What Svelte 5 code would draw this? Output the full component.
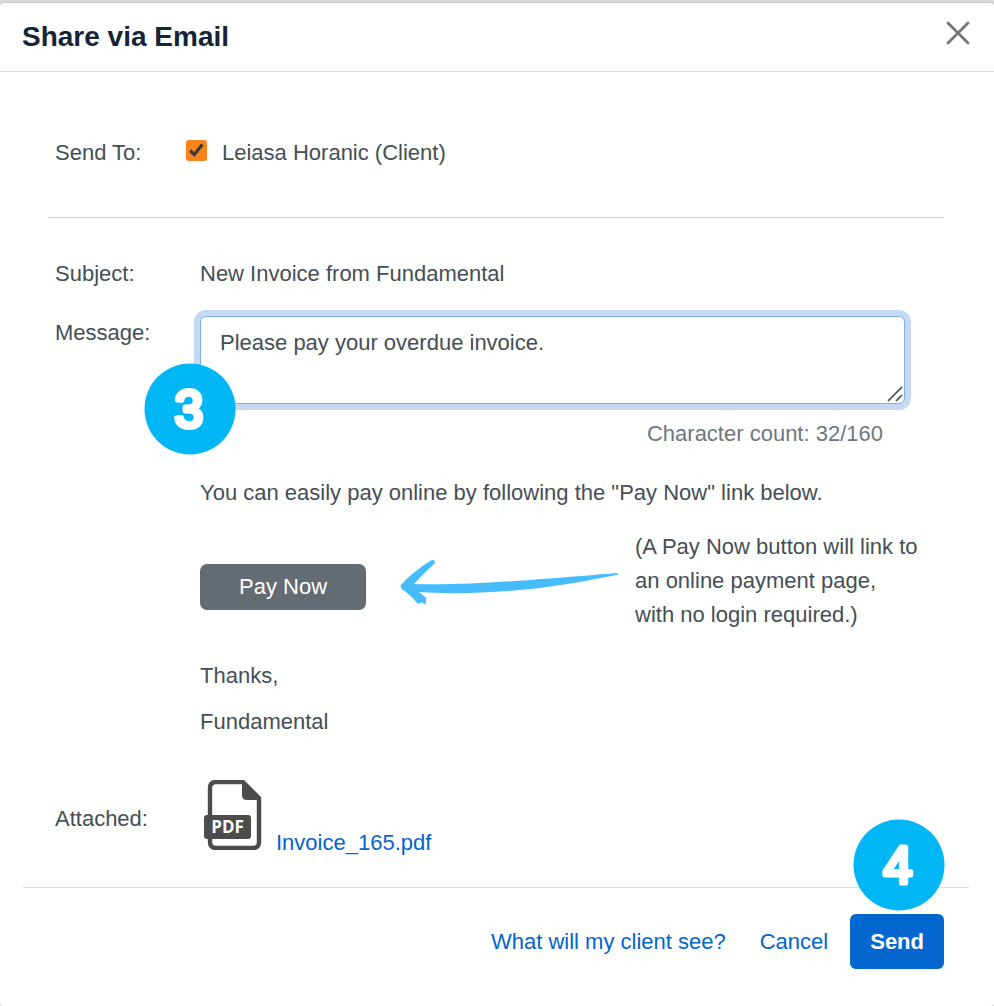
<script lang="ts">
	let sendToClient = $state(true);
	let message = $state('Please pay your overdue invoice.');

	const limit = 160;
	const count = $derived(message.length);
</script>

{#snippet badge(step: string)}
	<svg viewBox="0 0 92 92" width="92" height="92" role="img" aria-label={`Step ${step}`}>
		<circle cx="46" cy="46" r="45.5" fill="#00b6f5" />
		<text x="45" y="64" text-anchor="middle">{step}</text>
	</svg>
{/snippet}

<main class="dialog" aria-labelledby="title">
	<header class="header">
		<h1 id="title">Share via Email</h1>
		<button type="button" class="close" aria-label="Close">
			<svg viewBox="0 0 24 24" width="24" height="24">
				<path d="M2 2L22 22M22 2L2 22" stroke="#757575" stroke-width="2.8" stroke-linecap="round" />
			</svg>
		</button>
	</header>

	<div class="body">
		<section class="row send-to">
			<span class="label">Send To:</span>
			<label class="recipient">
				<span class="check">
					<input type="checkbox" bind:checked={sendToClient} />
					{#if sendToClient}
						<svg viewBox="0 0 21 21" width="21" height="21">
							<path d="M4.2 10.5L8.3 14.6L16.3 4.4" fill="none" stroke="#3b3b3b" stroke-width="3.2" />
						</svg>
					{/if}
				</span>
				Leiasa Horanic (Client)
			</label>
		</section>

		<section class="row subject">
			<span class="label">Subject:</span>
			<span>New Invoice from Fundamental</span>
		</section>

		<section class="row">
			<label class="label" for="message">Message:</label>
			<div class="content">
				<div class="message">
					<textarea id="message" rows="2" maxlength={limit} bind:value={message}></textarea>
					<svg class="grip" viewBox="0 0 16 16" width="16" height="16">
						<path d="M1 15L15 1M9 15L15 9" stroke="#444" stroke-width="1.6" />
					</svg>
					<div class="badge badge-message">{@render badge('3')}</div>
				</div>
				<p class="count">Character count: {count}/{limit}</p>

				<p class="intro">You can easily pay online by following the "Pay Now" link below.</p>
				<div class="pay">
					<button type="button" class="pay-now">Pay Now</button>
					<svg class="arrow" viewBox="0 0 220 46" width="220" height="46">
						<path
							d="M1 25Q0 27 2 29C9 34 14 39 17 43Q19 45 22 42L24 44Q26 45 26 40Q27 38 24 36L19 32C76 36 146 29 190 20Q205 17 217 15Q219 14 217 13C166 17 73 26 14 24Q24 13 34 4Q36 1 33 0Q31 0 27 3C18 9 8 17 1 25Z"
							fill="#46bcff"
						/>
					</svg>
					<p class="note">
						(A Pay Now button will link to<br />an online payment page,<br />with no login required.)
					</p>
				</div>
				<p class="thanks">Thanks,</p>
				<p class="sender">Fundamental</p>
			</div>
		</section>

		<section class="row attached">
			<span class="label">Attached:</span>
			<div class="file">
				<svg viewBox="0 0 58 70" width="58" height="70" role="img" aria-label="PDF file">
					<path
						d="M38 2H12Q6 2 6 8V62Q6 68 12 68H49Q55 68 55 62V18"
						fill="none"
						stroke="#4c4c4c"
						stroke-width="4.4"
					/>
					<path d="M38 0H40L57 17V20H43Q38 20 38 15Z" fill="#4c4c4c" />
					<rect x="0" y="35" width="47" height="24" rx="3" fill="#4c4c4c" />
					<text x="23.5" y="53" text-anchor="middle">PDF</text>
				</svg>
				<a href="#invoice">Invoice_165.pdf</a>
			</div>
		</section>
	</div>

	<footer class="footer">
		<a href="#preview">What will my client see?</a>
		<button type="button" class="cancel">Cancel</button>
		<div class="send-wrap">
			<button type="button" class="send">Send</button>
			<div class="badge badge-send">{@render badge('4')}</div>
		</div>
	</footer>
</main>

<style>
	:global(body) {
		background: #dadada;
	}

	.dialog {
		box-sizing: border-box;
		min-height: calc(100vh - 2px);
		margin-top: 2px;
		border-top: 1px solid #c8c8c8;
		border-radius: 4px;
		background: #fff;
		color: #464e56;
		font-family: 'Liberation Sans', Arial, sans-serif;
		font-size: 22px;
		line-height: 34px;
	}

	h1,
	p {
		margin: 0;
	}

	button {
		padding: 0;
		border: 0;
		background: none;
		font: inherit;
		cursor: pointer;
	}

	svg {
		display: block;
	}

	a,
	.cancel {
		color: #0465cc;
		text-decoration: none;
	}

	.header {
		display: flex;
		justify-content: space-between;
		align-items: center;
		height: 68px;
		padding: 0 24px 0 22px;
		border-bottom: 1px solid #dedede;
	}

	h1 {
		color: #152536;
		font-size: 28px;
	}

	.close {
		margin-bottom: 8px;
	}

	.body {
		padding: 64px 50px 37px 48px;
	}

	.row {
		display: grid;
		grid-template-columns: 145px 1fr;
		padding-left: 7px;
	}

	.send-to {
		padding-bottom: 47px;
		border-bottom: 1px solid #d0d0d0;
	}

	.recipient {
		display: flex;
		align-items: center;
		gap: 15px;
		margin-left: -14px;
	}

	.check {
		position: relative;
		margin-bottom: 5px;
	}

	.check input {
		display: block;
		width: 21px;
		height: 21px;
		margin: 0;
		appearance: none;
		border-radius: 3px;
		background: #fb831d;
	}

	.check svg {
		position: absolute;
		inset: 0;
		pointer-events: none;
	}

	.subject {
		margin: 39px 0 25px;
	}

	.message {
		position: relative;
		margin-right: 39px;
	}

	textarea {
		display: block;
		box-sizing: border-box;
		width: 100%;
		padding: 9px 19px;
		border: 1px solid #7db1ec;
		border-radius: 6px;
		outline: none;
		box-shadow: 0 0 0 6px #c6d9f3;
		resize: none;
		color: inherit;
		font: inherit;
	}

	.grip {
		position: absolute;
		right: 2px;
		bottom: 2px;
	}

	.badge {
		position: absolute;
	}

	.badge text {
		fill: #fff;
		stroke: #fff;
		stroke-width: 5px;
		stroke-linejoin: round;
		font-family: 'Liberation Sans Narrow', 'Liberation Sans', sans-serif;
		font-size: 51px;
	}

	.badge-message {
		top: 47px;
		left: -56px;
	}

	.badge-send {
		right: -1px;
		bottom: 58px;
	}

	.count {
		margin: 13px 61px 25px 0;
		color: #6e7780;
		text-align: right;
	}

	.pay {
		display: flex;
		align-items: flex-start;
		margin-top: 20px;
	}

	.pay-now {
		height: 46px;
		margin-top: 34px;
		padding: 0 39px;
		border-radius: 7px;
		background: #646c73;
		color: #fff;
		white-space: nowrap;
	}

	.arrow {
		flex: none;
		margin: 30px 15px 0 34px;
	}

	.note {
		white-space: nowrap;
	}

	.thanks {
		margin: 27px 0 12px;
	}

	.attached {
		align-items: center;
		margin-top: 41px;
	}

	.attached .label {
		margin-top: 8px;
	}

	.file {
		display: flex;
		align-items: flex-end;
		gap: 14px;
		margin-left: 4px;
	}

	.file text {
		fill: #fff;
		font-family: 'Open Sans', sans-serif;
		font-size: 17px;
		font-weight: 700;
	}

	.file a {
		margin-bottom: -10px;
	}

	.footer {
		display: flex;
		justify-content: flex-end;
		align-items: center;
		margin: 0 25px 0 23px;
		padding: 26px 25px 36px 0;
		border-top: 1px solid #dedede;
	}

	.cancel {
		margin: 0 22px 0 34px;
	}

	.send-wrap {
		position: relative;
	}

	.send {
		height: 55px;
		padding: 0 20px;
		border-radius: 6px;
		background: #0467cf;
		color: #fff;
		font-weight: 700;
	}
</style>
